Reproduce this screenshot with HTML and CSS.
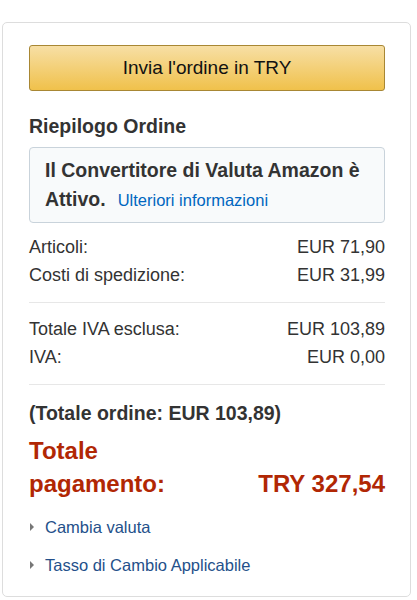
FILE: index.html
```html
<!DOCTYPE html>
<html lang="it">
<head>
  <meta charset="UTF-8">
  <meta name="viewport" content="width=device-width, initial-scale=1">
  <title>Riepilogo Ordine</title>
  <link rel="stylesheet" href="styles.css">
</head>
<body>
  <div class="order-box">
    <button class="place-order">Invia l'ordine in TRY</button>

    <h2 class="summary-title">Riepilogo Ordine</h2>

    <div class="converter-note">
      Il Convertitore di Valuta Amazon è Attivo.<a href="#" class="more-info">Ulteriori informazioni</a>
    </div>

    <div class="rows">
      <div class="row"><span>Articoli:</span><span>EUR 71,90</span></div>
      <div class="row"><span>Costi di spedizione:</span><span>EUR 31,99</span></div>
    </div>

    <hr class="divider">

    <div class="rows">
      <div class="row"><span>Totale IVA esclusa:</span><span>EUR 103,89</span></div>
      <div class="row"><span>IVA:</span><span>EUR 0,00</span></div>
    </div>

    <hr class="divider">

    <p class="order-total">(Totale ordine: EUR 103,89)</p>

    <div class="grand-total">
      <span class="grand-label">Totale pagamento:</span>
      <span class="grand-value">TRY 327,54</span>
    </div>

    <ul class="extra-links">
      <li><a href="#">Cambia valuta</a></li>
      <li><a href="#">Tasso di Cambio Applicabile</a></li>
    </ul>
  </div>
</body>
</html>
```

FILE: styles.css
```css
*, *::before, *::after {
  box-sizing: border-box;
}

body {
  margin: 0;
  padding: 0;
  background-color: #fff;
  color: #333;
  font-family: 'Liberation Sans', Arial, sans-serif;
}

.order-box {
  width: 409px;
  margin: 22px 0 0 2px;
  padding: 22px 25px 21px 26px;
  border: 1px solid #dddddd;
  border-radius: 5px;
}

/* bottone giallo */
.place-order {
  display: block;
  width: 100%;
  height: 46px;
  margin: 0;
  padding: 0;
  font-family: inherit;
  font-size: 19px;
  color: #111;
  background: linear-gradient(to bottom, #f7dfa5, #f0c14b);
  border: 1px solid #a88734;
  border-radius: 3px;
  cursor: pointer;
}

.summary-title {
  margin: 23px 0 9px;
  font-size: 19.5px;
  line-height: 24px;
  font-weight: bold;
  color: #333;
}

.converter-note {
  padding: 8px 15px 7px;
  border: 1px solid #c9d3db;
  border-radius: 4px;
  background-color: #f8fafb;
  font-size: 19.5px;
  line-height: 29px;
  font-weight: bold;
  color: #333;
}

.more-info {
  margin-left: 12px;
  font-size: 16.5px;
  font-weight: normal;
  color: #0066c0;
  text-decoration: none;
}

.rows {
  margin-top: 10px;
}

.divider + .rows {
  margin-top: 12px;
}

.row {
  display: flex;
  justify-content: space-between;
  font-size: 18px;
  line-height: 28px;
  color: #333;
}

.divider {
  margin: 13px 0 0;
  border: none;
  border-top: 1px solid #e7e7e7;
}

.order-total {
  margin: 14px 0 0;
  font-size: 19.5px;
  line-height: 28px;
  font-weight: bold;
  color: #333;
}

.grand-total {
  display: flex;
  justify-content: space-between;
  align-items: flex-end;
  margin-top: 7px;
  font-size: 24px;
  line-height: 33px;
  font-weight: bold;
  color: #b12704;
}

.grand-label {
  width: 170px;
}

.extra-links {
  list-style: none;
  margin: 17px 0 0;
  padding: 0;
}

.extra-links li {
  font-size: 16.5px;
  line-height: 20px;
}

.extra-links li + li {
  margin-top: 18px;
}

.extra-links a {
  color: #24508a;
  text-decoration: none;
}

.extra-links a::before {
  content: "";
  display: inline-block;
  width: 0;
  height: 0;
  margin: 0 11px 0 1px;
  border-top: 4px solid transparent;
  border-bottom: 4px solid transparent;
  border-left: 4px solid #777;
  vertical-align: 2px;
}
```
